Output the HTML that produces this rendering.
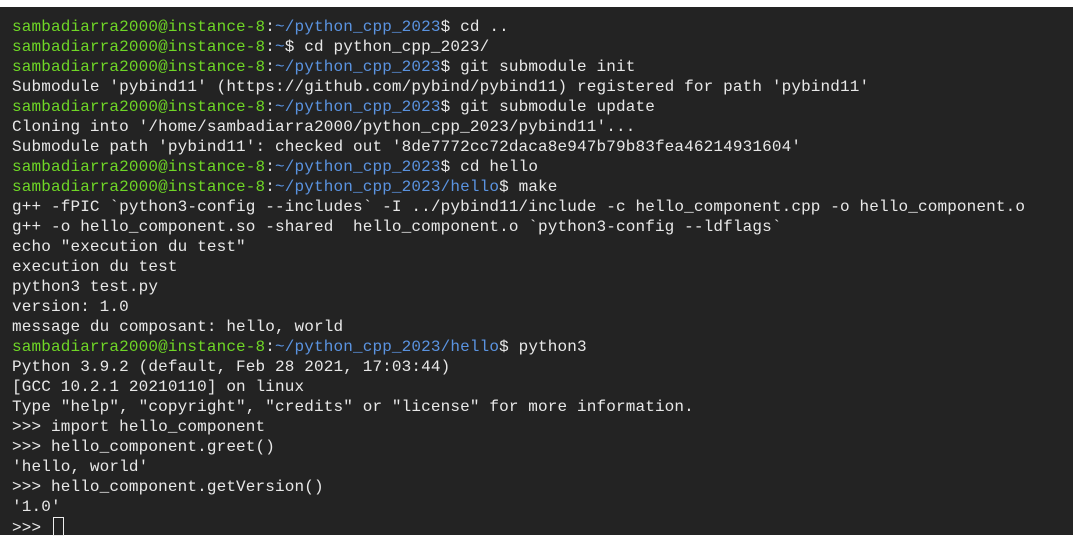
<!DOCTYPE html>
<html><head><meta charset="utf-8"><style>
html,body{margin:0;padding:0;background:#fff;width:1073px;height:535px;overflow:hidden}
#t{position:absolute;left:0;top:7px;width:1073px;height:528px;background:#232323}
pre{margin:0;position:absolute;left:12px;top:10px;font-family:"Liberation Mono",monospace;font-size:16px;letter-spacing:0.14px;line-height:20px;color:#e8e8e8}
.g{color:#6fd626}.b{color:#5a93e0}
.c{display:inline-block;width:9px;height:17px;border:1px solid #eee;vertical-align:-4px;margin-left:2px}
</style></head><body><div id="t"><pre><span class="g">sambadiarra2000@instance-8</span>:<span class="b">~/python_cpp_2023</span>$ cd ..
<span class="g">sambadiarra2000@instance-8</span>:<span class="b">~</span>$ cd python_cpp_2023/
<span class="g">sambadiarra2000@instance-8</span>:<span class="b">~/python_cpp_2023</span>$ git submodule init
Submodule 'pybind11' (https://github.com/pybind/pybind11) registered for path 'pybind11'
<span class="g">sambadiarra2000@instance-8</span>:<span class="b">~/python_cpp_2023</span>$ git submodule update
Cloning into '/home/sambadiarra2000/python_cpp_2023/pybind11'...
Submodule path 'pybind11': checked out '8de7772cc72daca8e947b79b83fea46214931604'
<span class="g">sambadiarra2000@instance-8</span>:<span class="b">~/python_cpp_2023</span>$ cd hello
<span class="g">sambadiarra2000@instance-8</span>:<span class="b">~/python_cpp_2023/hello</span>$ make
g++ -fPIC `python3-config --includes` -I ../pybind11/include -c hello_component.cpp -o hello_component.o
g++ -o hello_component.so -shared  hello_component.o `python3-config --ldflags`
echo "execution du test"
execution du test
python3 test.py
version: 1.0
message du composant: hello, world
<span class="g">sambadiarra2000@instance-8</span>:<span class="b">~/python_cpp_2023/hello</span>$ python3
Python 3.9.2 (default, Feb 28 2021, 17:03:44)
[GCC 10.2.1 20210110] on linux
Type "help", "copyright", "credits" or "license" for more information.
&gt;&gt;&gt; import hello_component
&gt;&gt;&gt; hello_component.greet()
'hello, world'
&gt;&gt;&gt; hello_component.getVersion()
'1.0'
&gt;&gt;&gt; <span class="c"></span></pre></div></body></html>
